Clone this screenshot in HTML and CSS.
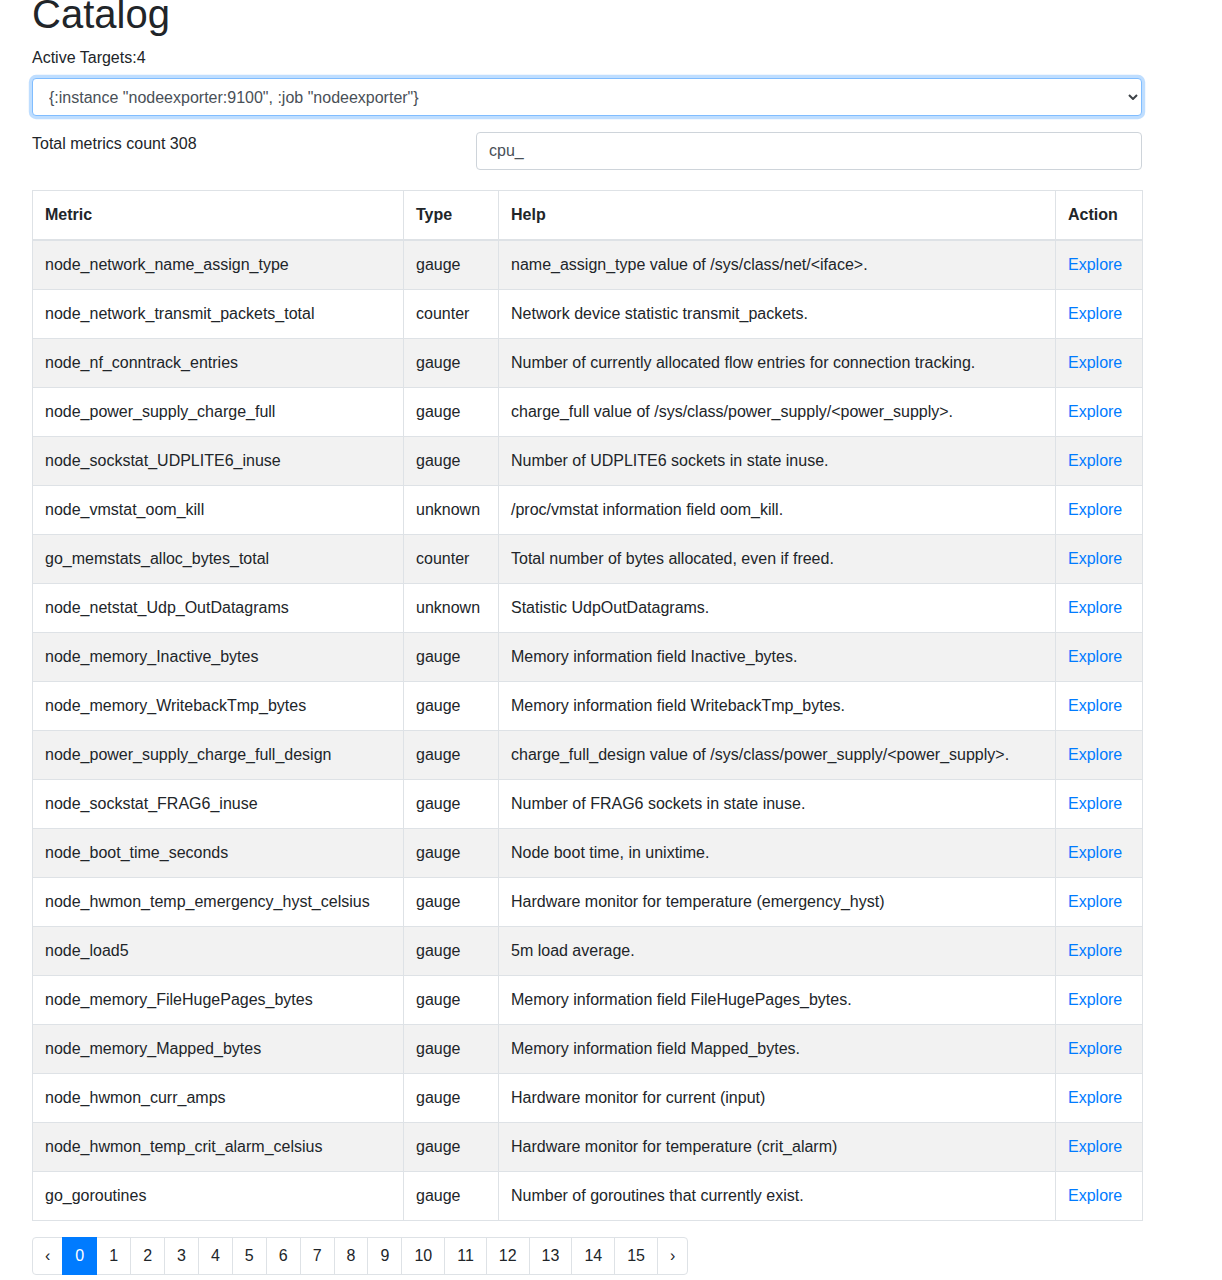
FILE: index.html
```html
<!DOCTYPE html>
<html>
<head>
<meta charset="utf-8">
<title>Catalog</title>
<link rel="stylesheet" href="styles.css">
</head>
<body>
<div class="page">
  <h1 class="title">Catalog</h1>
  <div class="targets">Active Targets:4</div>
  <div class="select-wrap">
    <select class="target-select">
      <option>{:instance "nodeexporter:9100", :job "nodeexporter"}</option>
    </select>
    <svg class="chev" width="10" height="6" viewBox="0 0 10 6"><path d="M1 1 L5 5 L9 1" fill="none" stroke="#3d4247" stroke-width="2"/></svg>
  </div>
  <div class="filter-row">
    <div class="count">Total metrics count 308</div>
    <input class="search" type="text" value="cpu_">
  </div>
  <table class="metrics">
    <colgroup>
      <col class="c-metric"><col class="c-type"><col class="c-help"><col class="c-action">
    </colgroup>
    <thead>
      <tr><th>Metric</th><th>Type</th><th>Help</th><th>Action</th></tr>
    </thead>
    <tbody>
      <tr><td>node_network_name_assign_type</td><td>gauge</td><td>name_assign_type value of /sys/class/net/&lt;iface&gt;.</td><td><a href="#">Explore</a></td></tr>
      <tr><td>node_network_transmit_packets_total</td><td>counter</td><td>Network device statistic transmit_packets.</td><td><a href="#">Explore</a></td></tr>
      <tr><td>node_nf_conntrack_entries</td><td>gauge</td><td>Number of currently allocated flow entries for connection tracking.</td><td><a href="#">Explore</a></td></tr>
      <tr><td>node_power_supply_charge_full</td><td>gauge</td><td>charge_full value of /sys/class/power_supply/&lt;power_supply&gt;.</td><td><a href="#">Explore</a></td></tr>
      <tr><td>node_sockstat_UDPLITE6_inuse</td><td>gauge</td><td>Number of UDPLITE6 sockets in state inuse.</td><td><a href="#">Explore</a></td></tr>
      <tr><td>node_vmstat_oom_kill</td><td>unknown</td><td>/proc/vmstat information field oom_kill.</td><td><a href="#">Explore</a></td></tr>
      <tr><td>go_memstats_alloc_bytes_total</td><td>counter</td><td>Total number of bytes allocated, even if freed.</td><td><a href="#">Explore</a></td></tr>
      <tr><td>node_netstat_Udp_OutDatagrams</td><td>unknown</td><td>Statistic UdpOutDatagrams.</td><td><a href="#">Explore</a></td></tr>
      <tr><td>node_memory_Inactive_bytes</td><td>gauge</td><td>Memory information field Inactive_bytes.</td><td><a href="#">Explore</a></td></tr>
      <tr><td>node_memory_WritebackTmp_bytes</td><td>gauge</td><td>Memory information field WritebackTmp_bytes.</td><td><a href="#">Explore</a></td></tr>
      <tr><td>node_power_supply_charge_full_design</td><td>gauge</td><td>charge_full_design value of /sys/class/power_supply/&lt;power_supply&gt;.</td><td><a href="#">Explore</a></td></tr>
      <tr><td>node_sockstat_FRAG6_inuse</td><td>gauge</td><td>Number of FRAG6 sockets in state inuse.</td><td><a href="#">Explore</a></td></tr>
      <tr><td>node_boot_time_seconds</td><td>gauge</td><td>Node boot time, in unixtime.</td><td><a href="#">Explore</a></td></tr>
      <tr><td>node_hwmon_temp_emergency_hyst_celsius</td><td>gauge</td><td>Hardware monitor for temperature (emergency_hyst)</td><td><a href="#">Explore</a></td></tr>
      <tr><td>node_load5</td><td>gauge</td><td>5m load average.</td><td><a href="#">Explore</a></td></tr>
      <tr><td>node_memory_FileHugePages_bytes</td><td>gauge</td><td>Memory information field FileHugePages_bytes.</td><td><a href="#">Explore</a></td></tr>
      <tr><td>node_memory_Mapped_bytes</td><td>gauge</td><td>Memory information field Mapped_bytes.</td><td><a href="#">Explore</a></td></tr>
      <tr><td>node_hwmon_curr_amps</td><td>gauge</td><td>Hardware monitor for current (input)</td><td><a href="#">Explore</a></td></tr>
      <tr><td>node_hwmon_temp_crit_alarm_celsius</td><td>gauge</td><td>Hardware monitor for temperature (crit_alarm)</td><td><a href="#">Explore</a></td></tr>
      <tr><td>go_goroutines</td><td>gauge</td><td>Number of goroutines that currently exist.</td><td><a href="#">Explore</a></td></tr>
    </tbody>
  </table>
  <ul class="pagination">
    <li class="page-item"><a class="page-link" href="#">‹</a></li>
    <li class="page-item active"><a class="page-link" href="#">0</a></li>
    <li class="page-item"><a class="page-link" href="#">1</a></li>
    <li class="page-item"><a class="page-link" href="#">2</a></li>
    <li class="page-item"><a class="page-link" href="#">3</a></li>
    <li class="page-item"><a class="page-link" href="#">4</a></li>
    <li class="page-item"><a class="page-link" href="#">5</a></li>
    <li class="page-item"><a class="page-link" href="#">6</a></li>
    <li class="page-item"><a class="page-link" href="#">7</a></li>
    <li class="page-item"><a class="page-link" href="#">8</a></li>
    <li class="page-item"><a class="page-link" href="#">9</a></li>
    <li class="page-item"><a class="page-link" href="#">10</a></li>
    <li class="page-item"><a class="page-link" href="#">11</a></li>
    <li class="page-item"><a class="page-link" href="#">12</a></li>
    <li class="page-item"><a class="page-link" href="#">13</a></li>
    <li class="page-item"><a class="page-link" href="#">14</a></li>
    <li class="page-item"><a class="page-link" href="#">15</a></li>
    <li class="page-item"><a class="page-link" href="#">›</a></li>
  </ul>
</div>
</body>
</html>
```

FILE: styles.css
```css
* { box-sizing: border-box; }
html, body { margin: 0; padding: 0; background: #fff; }
body {
  font-family: "Liberation Sans", Arial, Helvetica, sans-serif;
  font-size: 16px;
  line-height: 24px;
  color: #212529;
}
.page {
  width: 1110px;
  margin-left: 32px;
}
.title {
  font-size: 40px;
  font-weight: 500;
  line-height: 48px;
  margin: -10px 0 8px 0;
}
.targets {
  margin-bottom: 8px;
}
.select-wrap {
  position: relative;
  height: 38px;
}
.target-select {
  -webkit-appearance: none;
  appearance: none;
  display: block;
  width: 100%;
  height: 38px;
  padding: 7px 28px 5px 16px;
  font-family: inherit;
  font-size: 16px;
  line-height: 24px;
  color: #495057;
  background: #fff;
  border: 1px solid #80bdff;
  border-radius: 4px;
  box-shadow: 0 0 0 3.2px rgba(0, 123, 255, 0.25);
  outline: none;
}
.chev {
  position: absolute;
  right: 4px;
  top: 16px;
  pointer-events: none;
}
.filter-row {
  display: grid;
  grid-template-columns: 444px 666px;
  margin-top: 16px;
}
.search {
  display: block;
  width: 100%;
  height: 38px;
  padding: 6px 12px;
  font-family: inherit;
  font-size: 16px;
  line-height: 24px;
  color: #495057;
  background: #fff;
  border: 1px solid #ced4da;
  border-radius: 4px;
  outline: none;
}
.metrics {
  width: 1110px;
  margin-top: 20px;
  margin-bottom: 16px;
  border-collapse: collapse;
  table-layout: fixed;
  color: #212529;
}
.c-metric { width: 371px; }
.c-type { width: 95px; }
.c-help { width: 557px; }
.c-action { width: 87px; }
.metrics th, .metrics td {
  padding: 12px;
  border: 1px solid #dee2e6;
  text-align: left;
  vertical-align: top;
  white-space: nowrap;
}
.metrics th {
  font-weight: 700;
  border-bottom-width: 2px;
}
.metrics tbody tr:nth-child(odd) {
  background: #f2f2f2;
}
.metrics a {
  color: #007bff;
  text-decoration: none;
}
.pagination {
  display: flex;
  list-style: none;
  padding: 0;
  margin: 0;
}
.page-link {
  display: block;
  padding: 8px 12px;
  margin-left: -1px;
  line-height: 20px;
  color: #212529;
  text-decoration: none;
  background: #fff;
  border: 1px solid #dee2e6;
}
.page-item:first-child .page-link {
  margin-left: 0;
  border-radius: 4px 0 0 4px;
}
.page-item:last-child .page-link {
  border-radius: 0 4px 4px 0;
}
.page-item.active .page-link {
  position: relative;
  z-index: 1;
  color: #fff;
  background: #007bff;
  border-color: #007bff;
}
```
